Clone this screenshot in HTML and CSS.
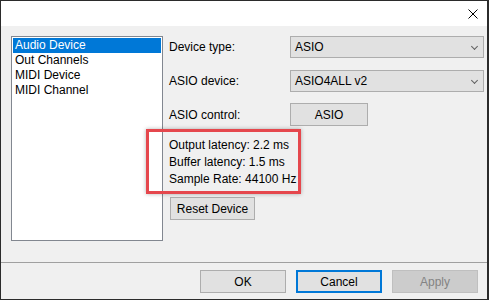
FILE: index.html
```html
<!DOCTYPE html>
<html lang="en">

<head>
    <meta charset="UTF-8" />
    <title>Audio Settings</title>
    <link rel="stylesheet" href="styles.css">
</head>

<body>
    <div class="window">
        <div class="titlebar">
            <svg class="close" width="10" height="10" viewBox="0 0 10 10">
                <path d="M0.5 0.5 L9.5 9.5 M9.5 0.5 L0.5 9.5" stroke="#000" stroke-width="1" fill="none" />
            </svg>
        </div>

        <div class="content">
            <ul class="listbox">
                <li class="selected">Audio Device</li>
                <li>Out Channels</li>
                <li>MIDI Device</li>
                <li>MIDI Channel</li>
            </ul>

            <div class="panel">
                <div class="row row-first">
                    <span class="label">Device type:</span>
                    <div class="combo">ASIO<span class="arrow"></span></div>
                </div>
                <div class="row">
                    <span class="label">ASIO device:</span>
                    <div class="combo">ASIO4ALL v2<span class="arrow"></span></div>
                </div>
                <div class="row row-button">
                    <span class="label">ASIO control:</span>
                    <button class="btn btn-asio">ASIO</button>
                </div>

                <div class="info">
                    <div>Output latency: 2.2 ms</div>
                    <div>Buffer latency: 1.5 ms</div>
                    <div>Sample Rate: 44100 Hz</div>
                </div>

                <button class="btn btn-reset">Reset Device</button>
            </div>
        </div>

        <div class="footer">
            <button class="btn btn-footer">OK</button>
            <button class="btn btn-footer btn-default">Cancel</button>
            <button class="btn btn-footer" disabled>Apply</button>
        </div>

        <!-- red highlight annotation -->
        <div class="highlight"></div>
    </div>
</body>

</html>
```

FILE: styles.css
```css
body {
    margin: 0;
    font-family: "Liberation Sans", Arial, sans-serif;
    font-size: 12px;
    color: #000;
    background: #f0f0f0;
}

.window {
    position: relative;
    width: 489px;
    height: 300px;
    box-sizing: border-box;
    border: 1px solid #2b2b2b;
    border-right-width: 2px;
    background: #f0f0f0;
    display: flex;
    flex-direction: column;
}

.titlebar {
    height: 25px;
    background: #fff;
    display: flex;
    align-items: center;
    justify-content: flex-end;
    padding-right: 9px;
}

.content {
    display: flex;
    padding: 10px 0 0 10px;
    height: 225px;
}

/* List on the left */
.listbox {
    list-style: none;
    margin: 0;
    padding: 1px;
    width: 152px;
    height: 205px;
    box-sizing: border-box;
    background: #fff;
    border: 1px solid #828790;
}

.listbox li {
    height: 15px;
    line-height: 15px;
    padding-left: 2px;
}

.listbox li.selected {
    background: #0078d7;
    color: #fff;
}

/* Right panel */
.panel {
    margin-left: 6px;
    display: flex;
    flex-direction: column;
    align-items: flex-start;
}

.row {
    display: flex;
    align-items: center;
    height: 22px;
    margin-top: 12px;
}

.row-first {
    margin-top: 0;
}

.row-button {
    height: 23px;
    margin-top: 11px;
}

.label {
    width: 121px;
}

.combo {
    position: relative;
    width: 194px;
    height: 22px;
    box-sizing: border-box;
    border: 1px solid #adadad;
    background: #e1e1e1;
    line-height: 20px;
    padding-left: 4px;
}

.arrow {
    position: absolute;
    right: 6px;
    top: 7px;
    width: 4px;
    height: 4px;
    border-right: 1px solid #606060;
    border-bottom: 1px solid #606060;
    transform: rotate(45deg);
}

.btn {
    font-family: inherit;
    font-size: 12px;
    color: #000;
    background: #e1e1e1;
    border: 1px solid #adadad;
    height: 23px;
    padding: 0;
    box-sizing: border-box;
}

.btn-asio {
    width: 78px;
}

.info {
    margin-top: 11px;
    line-height: 17px;
}

.btn-reset {
    margin-top: 9px;
    margin-left: 1px;
    width: 85px;
}

/* Bottom buttons */
.footer {
    margin-top: auto;
    border-top: 1px solid #a0a0a0;
    display: flex;
    justify-content: flex-end;
    gap: 10px;
    padding: 7px 9px 6px 0;
}

.btn-footer {
    width: 86px;
}

.btn-default {
    border: 2px solid #0078d7;
}

.btn-footer:disabled {
    background: #cccccc;
    border-color: #bfbfbf;
    color: #838383;
}

.highlight {
    position: absolute;
    left: 145px;
    top: 128px;
    width: 155px;
    height: 65px;
    box-sizing: border-box;
    border: 3px solid #e5474d;
    box-shadow: 0 0 4px rgba(0, 0, 0, 0.3);
}
```
